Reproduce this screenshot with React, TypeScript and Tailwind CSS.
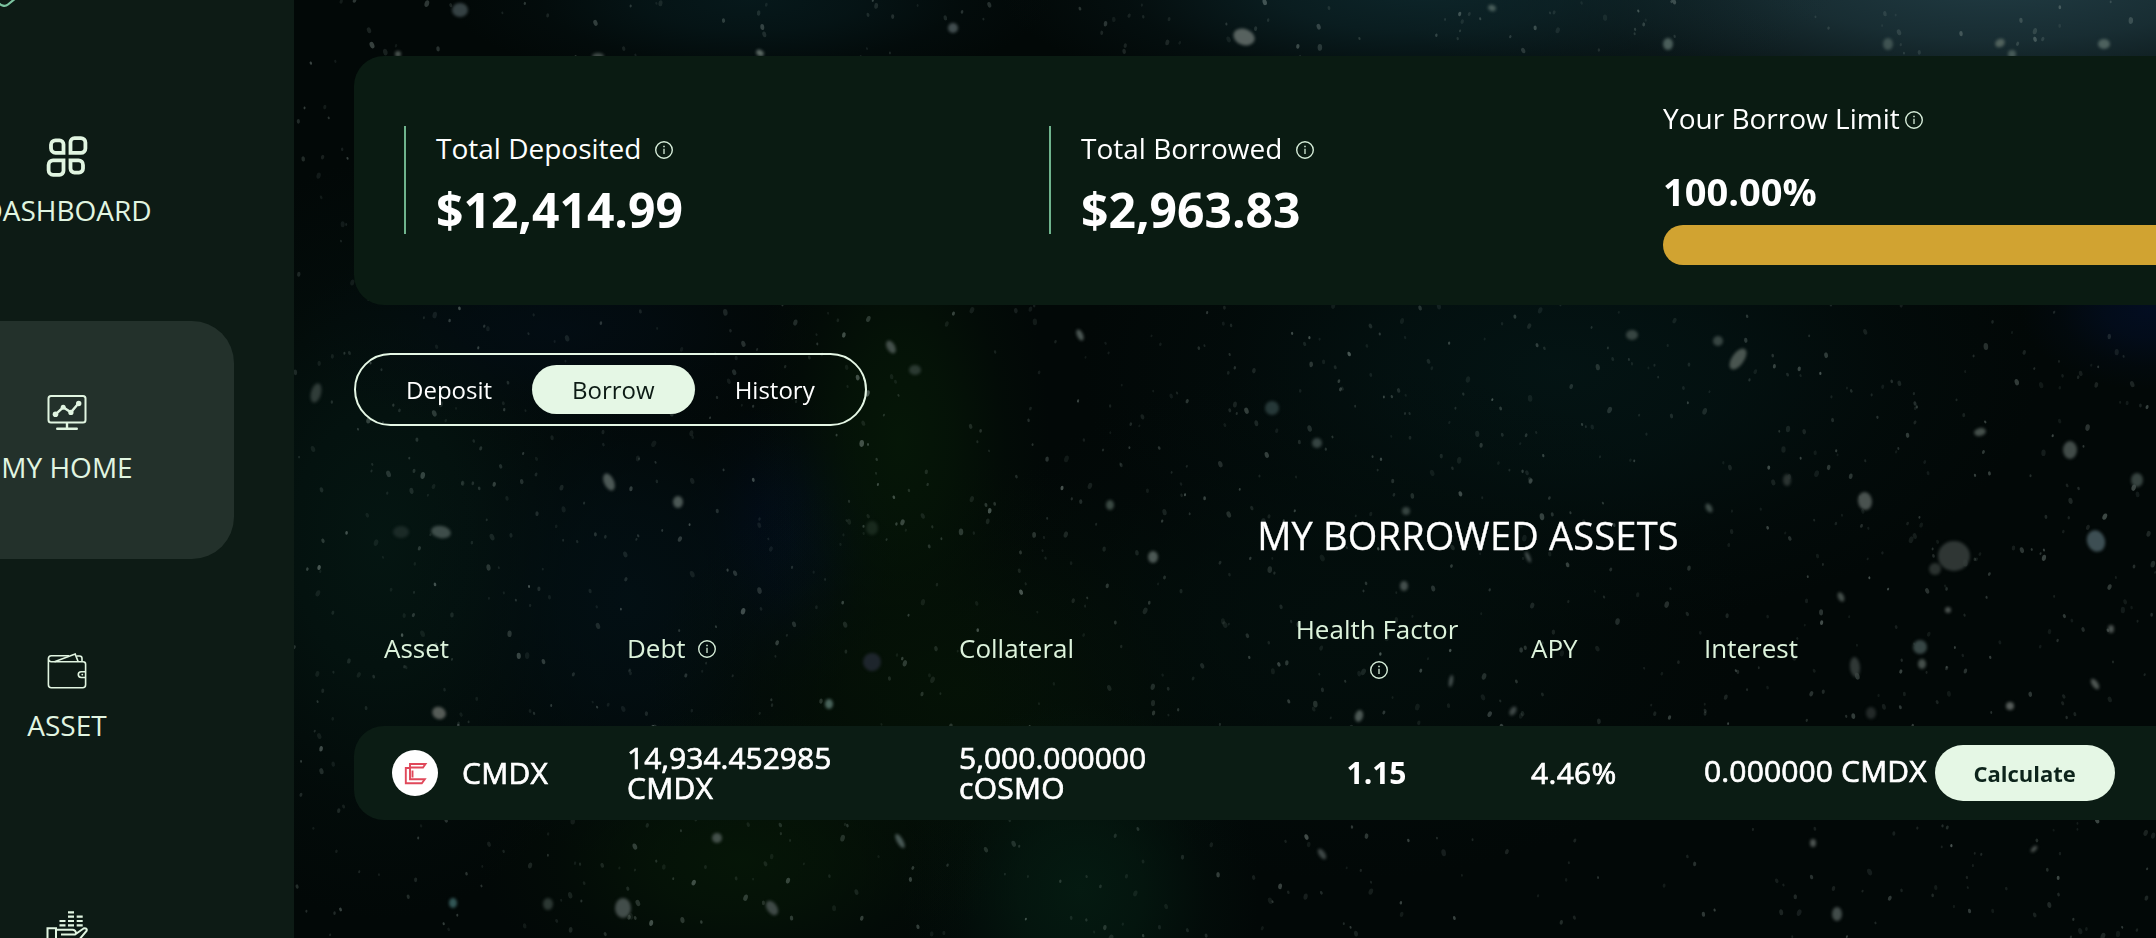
import type { ReactNode } from "react"

// x, y, rx, ry, rotation, color, opacity
const brightStars: [number, number, number, number, number, string, number][] = [
  [460, 10, 8, 7, 0, "#4c5a5c", 0.7], [953, 28, 5, 5, 0, "#5c6a6c", 0.7], [1244, 37, 11, 8, 20, "#6b7672", 0.8],
  [1668, 44, 5, 6, 0, "#5b6f6a", 0.8], [1888, 44, 5, 6, 0, "#5b6f6a", 0.6], [2000, 43, 5, 4, -30, "#6b7a70", 0.7],
  [2012, 54, 4, 4, 0, "#5b6f6a", 0.7], [2104, 44, 6, 5, 0, "#5b6f6a", 0.8], [1492, 8, 4, 3, 20, "#5b6f6a", 0.8],
  [760, 53, 4, 3, 30, "#9aa8a0", 0.6], [598, 56, 6, 3, 0, "#6b7672", 0.6], [398, 54, 3, 3, 0, "#9aa8a0", 0.5],
  [609, 482, 5, 9, -25, "#5f6b68", 0.8], [678, 502, 5, 6, 0, "#5f6b68", 0.8], [441, 532, 10, 6, 10, "#4d5c59", 0.8],
  [401, 532, 8, 6, 0, "#2a3836", 0.6], [1153, 557, 5, 6, 0, "#5f6b68", 0.8], [1272, 408, 7, 7, 0, "#2f4444", 0.8],
  [1317, 443, 5, 5, 0, "#3c4a48", 0.9], [1738, 359, 6, 12, 35, "#56625c", 0.85], [1632, 335, 6, 5, 0, "#45534f", 0.8],
  [1718, 341, 5, 5, 0, "#45534f", 0.8], [1980, 432, 6, 4, -15, "#56625c", 0.8], [2070, 450, 7, 9, 0, "#4c5754", 0.85],
  [1865, 501, 7, 9, -10, "#565f5c", 0.85], [1954, 556, 16, 15, 0, "#343c3a", 0.9], [1935, 569, 6, 6, 0, "#343c3a", 0.8],
  [2096, 541, 9, 11, -20, "#44575c", 0.9], [2137, 480, 6, 7, 0, "#45534f", 0.8], [1920, 647, 7, 7, 0, "#3a4a49", 0.95],
  [1855, 667, 5, 10, -5, "#3c4542", 0.8], [1922, 664, 4, 5, 0, "#56625c", 0.8], [1841, 597, 3, 5, -25, "#56625c", 0.8],
  [1359, 716, 4, 6, 15, "#5f6b68", 0.8], [439, 713, 7, 6, 25, "#6a6f6a", 0.8], [829, 704, 4, 5, 0, "#5c7a72", 0.8],
  [872, 662, 9, 9, 25, "#242b36", 0.8], [623, 908, 8, 10, 0, "#4d5856", 0.85], [772, 908, 5, 8, -35, "#4d5856", 0.8],
  [453, 903, 4, 5, 0, "#3f6a6a", 0.8], [548, 904, 5, 6, 0, "#37433f", 0.8], [900, 841, 3, 8, -30, "#5a6c69", 0.8],
  [717, 838, 5, 5, 0, "#5f6b68", 0.7], [1837, 914, 5, 7, 0, "#4d5856", 0.85], [1322, 854, 3, 6, -35, "#4d5856", 0.8],
  [316, 393, 5, 10, 15, "#3c4845", 0.8], [915, 370, 6, 5, 0, "#45534f", 0.6], [891, 347, 4, 7, -30, "#5f6b68", 0.7],
  [2010, 706, 4, 4, 0, "#5f6663", 0.9], [1871, 713, 5, 6, 0, "#272e2c", 0.9], [2095, 684, 3, 6, -35, "#555d5a", 0.9],
  [1110, 505, 4, 5, 0, "#4a5a52", 0.8], [1080, 335, 3, 6, -25, "#5f6b68", 0.8], [1709, 508, 3, 5, -30, "#45534f", 0.9],
  [872, 528, 6, 7, 0, "#26382c", 0.6], [1513, 711, 3, 5, 30, "#4d5856", 0.8], [1451, 681, 2, 6, 10, "#4d5856", 0.9],
  [1404, 586, 4, 5, 0, "#5f6b68", 0.7], [1528, 557, 2, 6, -25, "#4d5856", 0.9], [1787, 480, 4, 6, 0, "#303836", 0.9],
  [1406, 511, 4, 4, 0, "#45534f", 0.8], [2034, 751, 4, 4, 0, "#555d5a", 0.8], [1948, 610, 3, 3, 0, "#555d5a", 0.9],
  [2111, 629, 3, 4, 0, "#555d5a", 0.9], [1813, 843, 3, 4, 0, "#555d5a", 0.9], [2034, 849, 2, 4, 45, "#555d5a", 0.9],
]

// x, y, rx, ry, color
const clouds: [number, number, number, number, string][] = [
  [2000, -20, 620, 170, "#24414a"],
  [1420, -10, 420, 120, "#0e282d"],
  [750, 0, 300, 90, "#071a1d"],
  [380, 540, 260, 380, "#051713"],
  [790, 540, 110, 150, "#020c1d"],
  [630, 600, 220, 260, "#031015"],
  [560, 330, 260, 110, "#030d14"],
  [900, 440, 150, 280, "#061807"],
  [960, 690, 320, 230, "#051306"],
  [1080, 890, 180, 190, "#051c12"],
  [740, 860, 260, 150, "#061707"],
  [1560, 370, 480, 260, "#041515"],
  [1350, 620, 400, 260, "#030f0d"],
  [2150, 310, 130, 80, "#030e24"],
]

// seeded so the field of faint stars never moves between renders
function makeDust(count: number) {
  let seed = 41
  const next = () => {
    seed = (seed * 16807) % 2147483647
    return seed / 2147483647
  }
  return Array.from({ length: count }, () => {
    const size = next()
    return {
      x: 294 + next() * 1862,
      y: next() * 938,
      rx: 1 + size * size * 1.3,
      ry: 1.4 + size * size * 2.1,
      tilt: next() * 50 - 25,
      opacity: 0.1 + next() * next() * 0.36,
    }
  })
}

const dust = makeDust(1800)

function Starfield() {
  return (
    <svg className="absolute inset-0" width="2156" height="938" viewBox="0 0 2156 938" aria-hidden="true">
      <defs>
        <filter id="soft" x="-50%" y="-50%" width="200%" height="200%" colorInterpolationFilters="sRGB">
          <feGaussianBlur stdDeviation="1.6" />
        </filter>
        <filter id="faint" colorInterpolationFilters="sRGB">
          <feGaussianBlur stdDeviation="0.7" />
        </filter>
        {clouds.map(([x, y, , , color]) => (
          <radialGradient key={`${x}-${y}`} id={`cloud-${x}-${y + 100}`}>
            <stop offset="0" stopColor={color} stopOpacity="0.9" />
            <stop offset="0.35" stopColor={color} stopOpacity="0.65" />
            <stop offset="0.7" stopColor={color} stopOpacity="0.2" />
            <stop offset="1" stopColor={color} stopOpacity="0" />
          </radialGradient>
        ))}
      </defs>
      {clouds.map(([x, y, rx, ry]) => (
        <ellipse key={`${x}-${y}`} cx={x} cy={y} rx={rx} ry={ry} fill={`url(#cloud-${x}-${y + 100})`} />
      ))}
      <g fill="#9fb0aa" filter="url(#faint)">
        {dust.map((s, i) => (
          <ellipse
            key={i}
            cx={s.x}
            cy={s.y}
            rx={s.rx}
            ry={s.ry}
            opacity={s.opacity}
            transform={`rotate(${s.tilt} ${s.x} ${s.y})`}
          />
        ))}
      </g>
      <g filter="url(#soft)">
        {brightStars.map(([x, y, rx, ry, tilt, color, opacity]) => (
          <ellipse key={`${x}-${y}`} cx={x} cy={y} rx={rx} ry={ry} fill={color} opacity={opacity} transform={`rotate(${tilt} ${x} ${y})`} />
        ))}
      </g>
    </svg>
  )
}

function InfoIcon({ className = "" }: { className?: string }) {
  return (
    <svg className={`shrink-0 ${className}`} width="18" height="18" viewBox="0 0 18 18" fill="none" stroke="#d5ecd8">
      <circle cx="9" cy="9" r="8.3" strokeWidth="1.4" />
      <path d="M9 7.8v5.2" strokeWidth="1.3" />
      <path d="M9 4.7v1.5" strokeWidth="1.5" />
    </svg>
  )
}

function DashboardIcon() {
  return (
    <svg width="44" height="44" viewBox="0 0 44 44" fill="none" stroke="#e1f5e1" strokeWidth="3.8">
      <path d="M10.5 6.3h4a4 4 0 0 1 4 4v8.5h-8a4.500 4.500 0 0 1-4.500-4.500v-3.500a4.500 4.500 0 0 1 4.500-4.500z" />
      <path d="M29.500 4.100h6.400a4.500 4.500 0 0 1 4.500 4.500v5.800a4.500 4.500 0 0 1-4.500 4.500h-10.400V8.100a4 4 0 0 1 4-4z" />
      <path d="M8.100 26.400h10.400v10.400a4 4 0 0 1-4 4H8.100a4.500 4.500 0 0 1-4.500-4.500v-5.400a4.500 4.500 0 0 1 4.500-4.500z" />
      <path d="M25.500 26.400h8a4.500 4.500 0 0 1 4.500 4.500v3.700a4 4 0 0 1-4 4h-4.500a4 4 0 0 1-4-4z" />
    </svg>
  )
}

function HomeIcon() {
  return (
    <svg width="44" height="44" viewBox="0 0 44 44" fill="none" stroke="#e1f5e1" strokeWidth="2">
      <rect x="3.500" y="5" width="37" height="26.500" rx="2.500" />
      <path d="M22 31.500v6" strokeWidth="2.400" />
      <path d="M12.200 37.800h19.600" strokeWidth="2.400" strokeLinecap="round" />
      <path d="M10.500 23.300l7.700-7 7.700 5 7.700-9" strokeWidth="2.400" />
      <g fill="#e1f5e1" stroke="none">
        <circle cx="10.500" cy="23.300" r="2.800" />
        <circle cx="18.200" cy="16.200" r="2.500" />
        <circle cx="25.900" cy="21.400" r="2.600" />
        <circle cx="33.700" cy="12.500" r="2.700" />
      </g>
    </svg>
  )
}

function WalletIcon() {
  return (
    <svg width="44" height="44" viewBox="0 0 44 44" fill="none" stroke="#e1f5e1" strokeWidth="1.600">
      <path d="M3.400 9.800v25.900a3 3 0 0 0 3 3H37.600a3 3 0 0 0 3-3V15.300a2.500 2.500 0 0 0-2.500-2.500H6.400a3 3 0 0 1 0-6H24" />
      <path d="M9.500 12.800L30.200 5.100l3 7.700" />
      <path d="M31.500 7h3a2.500 2.500 0 0 1 2.500 2.500v3.300" />
      <path d="M40.600 22.700h-4.400a2.900 2.900 0 0 0 0 5.800h4.400" />
      <circle cx="37.300" cy="25.600" r="0.900" fill="#e1f5e1" stroke="none" />
    </svg>
  )
}

function EarnIcon() {
  return (
    <svg width="44" height="44" viewBox="0 0 44 44" fill="none" stroke="#e1f5e1" strokeWidth="2">
      <path
        d="M23 6.300h6M23 10.600h6M23 15h6M23 19.300h6M31.700 10.600h6M31.700 15h6M31.700 19.300h6M14.500 15h6M14.500 19.300h6"
        strokeWidth="2.200"
      />
      <path d="M2.500 22.200h8.500v20H2.500z" />
      <path d="M11 23.800h16.500a3.500 3.500 0 0 1 3.500 3.500M16 28.500h14l8.500-6c2-1 4 .5 3 2.500L33 35" />
    </svg>
  )
}

type NavItemProps = { icon: ReactNode; label?: string; active?: boolean }

function NavItem({ icon, label, active }: NavItemProps) {
  return (
    <div
      className={`flex h-[238px] w-[334px] shrink-0 flex-col items-center rounded-[42px] pt-[70px] ${
        active ? "bg-[#23312b]" : ""
      }`}
    >
      {icon}
      {label && <span className="mt-3 whitespace-nowrap text-[28px] leading-10 text-[#e1f5e1]">{label}</span>}
    </div>
  )
}

function Sidebar() {
  return (
    <aside className="relative flex w-[294px] shrink-0 flex-col overflow-hidden bg-[#0d1b15]">
      <div className="h-16 shrink-0">
        <svg width="20" height="10" viewBox="0 0 20 10" fill="none" stroke="#7cc4a0" strokeWidth="2.200">
          <path d="M-2 2C1 6 5 7 8 4.500L16-2" />
        </svg>
      </div>
      <nav className="-ml-[100px] flex flex-col">
        <NavItem icon={<DashboardIcon />} label="DASHBOARD" />
        <div className="mb-5 mt-[19px]">
          <NavItem icon={<HomeIcon />} label="MY HOME" active />
        </div>
        <NavItem icon={<WalletIcon />} label="ASSET" />
        <div className="mt-[19px]">
          <NavItem icon={<EarnIcon />} />
        </div>
      </nav>
    </aside>
  )
}

function Stat({ label, value, className }: { label: string; value: string; className: string }) {
  return (
    <div className={`shrink-0 ${className}`}>
      <div className="h-[108px] border-l-2 border-[#6fb48d] pl-[30px]">
        <div className="flex items-center gap-3.5 pt-px text-[28px] leading-[42px]">
          {label}
          <InfoIcon className="mt-1" />
        </div>
        <div className="mt-2 text-[48px] font-bold leading-[66px]">{value}</div>
      </div>
    </div>
  )
}

function Summary() {
  return (
    <section className="flex h-[249px] rounded-[30px] bg-[#0a1b12]">
      <Stat label="Total Deposited" value="$12,414.99" className="w-[695px] pl-[50px] pt-[70px]" />
      <Stat label="Total Borrowed" value="$2,963.83" className="w-[614px] pt-[70px]" />
      <div className="flex-1 pr-[50px] pt-[41px]">
        <div className="flex items-center gap-[5px] text-[28px] leading-[42px]">
          Your Borrow Limit
          <InfoIcon className="mt-1" />
        </div>
        <div className="mt-[26px] text-[38px] font-bold leading-[52px]">100.00%</div>
        <div className="mt-2 h-10 rounded-full bg-[#d1a331]" />
      </div>
    </section>
  )
}

function Tabs() {
  return (
    <div className="mt-12 flex h-[73px] w-fit items-center rounded-full border-2 border-[#e5f7e5] px-2.5 text-[24px]">
      <button className="h-[49px] px-10">Deposit</button>
      <button className="h-[49px] rounded-full bg-[#e5f7e5] px-10 text-[#0d1b15]">Borrow</button>
      <button className="h-[49px] px-10">History</button>
    </div>
  )
}

const columns = "grid grid-cols-[243px_332px_325px_246px_174px_1fr] items-center"

function CoinLogo() {
  return (
    <svg width="46" height="46" viewBox="0 0 46 46" fill="none" stroke="#e0485a" strokeWidth="1.900">
      <circle cx="23" cy="23" r="23" fill="#fff" stroke="none" />
      <path d="M33.500 14H18v3.500h13l2.500-3.500z" />
      <path d="M18 18h-4.200v15.200h16l3-4H18V18z" />
      <path d="M20.500 20.500v7" />
    </svg>
  )
}

function BorrowTable() {
  return (
    <section>
      <h2 className="mt-[83px] text-center text-[38px] leading-[52px] tracking-[0.2px] [-webkit-text-stroke:0.3px_white]">MY BORROWED ASSETS</h2>
      <div className={`${columns} mt-[41px] h-[92px] text-[26px] leading-[41px] text-[#ddf3dc]`}>
        <div className="pl-[30px]">Asset</div>
        <div className="flex items-center gap-3 pl-[30px]">
          Debt
          <InfoIcon className="mt-0.5" />
        </div>
        <div className="pl-[30px]">Collateral</div>
        <div className="flex flex-col items-center pt-0.5">
          <span>Health Factor</span>
          <span className="flex h-10 items-center pl-1">
            <InfoIcon />
          </span>
        </div>
        <div className="pl-[31px]">APY</div>
        <div className="pl-[30px]">Interest</div>
      </div>
      <div className={`${columns} mt-8 h-[94px] rounded-[30px] bg-[#0b1c14] text-[30px] font-medium leading-[30px]`}>
        <div className="flex items-center gap-6 pl-[38px] tracking-[0.3px] [-webkit-text-stroke:0.7px_white]">
          <CoinLogo />
          CMDX
        </div>
        <div className="pl-[30px] [-webkit-text-stroke:0.7px_white]">
          14,934.452985
          <br />
          <span className="tracking-[0.3px]">CMDX</span>
        </div>
        <div className="pl-[30px] [-webkit-text-stroke:0.7px_white]">
          5,000.000000
          <br />
          <span className="tracking-[0.3px]">cOSMO</span>
        </div>
        <div className="pr-px text-center font-bold">1.15</div>
        <div className="pl-[31px] tracking-[0.3px] [-webkit-text-stroke:0.7px_white]">4.46%</div>
        <div className="flex items-center gap-2 pl-[30px]">
          <span className="-mt-1 tracking-[0.15px] [-webkit-text-stroke:0.7px_white]">0.000000 CMDX</span>
          <button className="h-14 w-[180px] rounded-full bg-[#e5f7e5] text-[22px] font-bold text-[#0d241b]">Calculate</button>
        </div>
      </div>
    </section>
  )
}

export default function App() {
  return (
    <div className="relative flex h-[938px] w-full overflow-hidden bg-[#020807] font-['Open_Sans',sans-serif] text-white">
      <Starfield />
      <Sidebar />
      <main className="relative ml-[60px] w-[2228px] shrink-0 pt-14">
        <Summary />
        <Tabs />
        <BorrowTable />
      </main>
    </div>
  )
}
